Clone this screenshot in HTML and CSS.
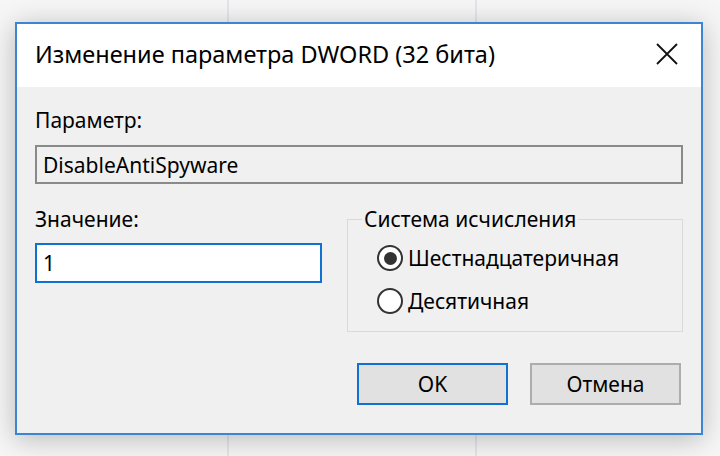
FILE: index.html
```html
<!DOCTYPE html>
<html>
<head>
    <title>Изменение параметра DWORD (32 бита)</title>
    <link rel="stylesheet" href="styles.css">
</head>
<body>
    <div class="dialog">
        <div class="titlebar">
            <span class="title">Изменение параметра DWORD (32 бита)</span>
            <button class="close" aria-label="Закрыть">
                <svg width="22" height="22" viewBox="0 0 22 22">
                    <path d="M1 1 L21 21 M21 1 L1 21" stroke="#111" stroke-width="1.8" fill="none"/>
                </svg>
            </button>
        </div>

        <div class="content">
            <label class="label">Параметр:</label>
            <input type="text" class="field field-name" value="DisableAntiSpyware" readonly>

            <div class="row">
                <div class="value-col">
                    <label class="label">Значение:</label>
                    <input type="text" class="field field-value" value="1">
                </div>

                <fieldset class="base">
                    <legend>Система исчисления</legend>
                    <label class="radio">
                        <input type="radio" name="base" checked>
                        <span>Шестнадцатеричная</span>
                    </label>
                    <label class="radio">
                        <input type="radio" name="base">
                        <span>Десятичная</span>
                    </label>
                </fieldset>
            </div>

            <div class="buttons">
                <button class="btn btn-default">OK</button>
                <button class="btn">Отмена</button>
            </div>
        </div>
    </div>
</body>
</html>
```

FILE: styles.css
```css
body {
    margin: 0;
    padding: 22px 0 0 15px;
    height: 456px;
    box-sizing: border-box;
    overflow: hidden;
    font-family: "Noto Sans", "Open Sans", sans-serif;
    color: #000;
    background-color: #f6f6f6;
    background-image:
        linear-gradient(#e2e6eb, #e2e6eb),
        linear-gradient(#e2e6eb, #e2e6eb);
    background-size: 2px 100%, 2px 100%;
    background-position: 227px 0, 475px 0;
    background-repeat: no-repeat;
}
.dialog {
    width: 688px;
    height: 413px;
    box-sizing: border-box;
    border: 2px solid #3a86d4;
    background-color: #f0f0f0;
    box-shadow: 0 4px 26px rgba(0, 0, 0, 0.25);
    display: flex;
    flex-direction: column;
}
.titlebar {
    height: 63px;
    flex: none;
    background-color: #fff;
    display: flex;
    align-items: center;
    padding-left: 18px;
}
.title {
    flex: 1;
    font-size: 23.5px;
    line-height: 30px;
    padding-bottom: 3px;
}
.close {
    width: 60px;
    height: 40px;
    margin-right: 4px;
    margin-bottom: 4px;
    border: none;
    background: none;
    padding: 0;
    display: flex;
    align-items: center;
    justify-content: center;
}
.content {
    flex: 1;
    padding: 21px 18px 0 18px;
    display: flex;
    flex-direction: column;
}
.label {
    display: block;
    font-size: 21px;
    line-height: 24px;
    margin-bottom: 13px;
}
.field {
    font-family: inherit;
    font-size: 21px;
    color: #000;
    margin: 0;
    padding: 0 0 0 6px;
    box-sizing: border-box;
    outline: none;
}
.field-name {
    width: 100%;
    height: 39px;
    border: 2px solid #8a8a8a;
    background-color: #f0f0f0;
}
.field-value {
    width: 100%;
    height: 40px;
    border: 2px solid #0f72d2;
    background-color: #fff;
}
.row {
    display: flex;
    gap: 25px;
    margin-top: 23px;
}
.value-col {
    width: 287px;
    flex: none;
}
.value-col .label {
    margin-bottom: 12px;
}
.base {
    flex: 1;
    margin: 0;
    padding: 0 0 15px 29px;
    border: 1px solid #d9d9d9;
}
.base legend {
    font-size: 21px;
    line-height: 24px;
    padding: 0 2px;
    margin-left: -15px;
}
.radio {
    display: flex;
    align-items: center;
    height: 30px;
    font-size: 21px;
    margin-top: 13px;
}
.radio:first-of-type {
    margin-top: 12px;
}
.radio input {
    appearance: none;
    width: 26px;
    height: 26px;
    margin: 0 5px 0 0;
    border: 2px solid #333;
    border-radius: 50%;
    background-color: #fff;
    box-sizing: border-box;
    display: flex;
    align-items: center;
    justify-content: center;
}
.radio input:checked::after {
    content: "";
    width: 13px;
    height: 13px;
    border-radius: 50%;
    background-color: #333;
}
.buttons {
    display: flex;
    justify-content: flex-end;
    gap: 22px;
    margin-top: 31px;
    padding-right: 2px;
}
.btn {
    width: 151px;
    height: 42px;
    font-family: inherit;
    font-size: 21px;
    color: #000;
    background-color: #e1e1e1;
    border: 2px solid #adadad;
    padding: 0;
}
.btn-default {
    border-color: #0f72d2;
}
```
